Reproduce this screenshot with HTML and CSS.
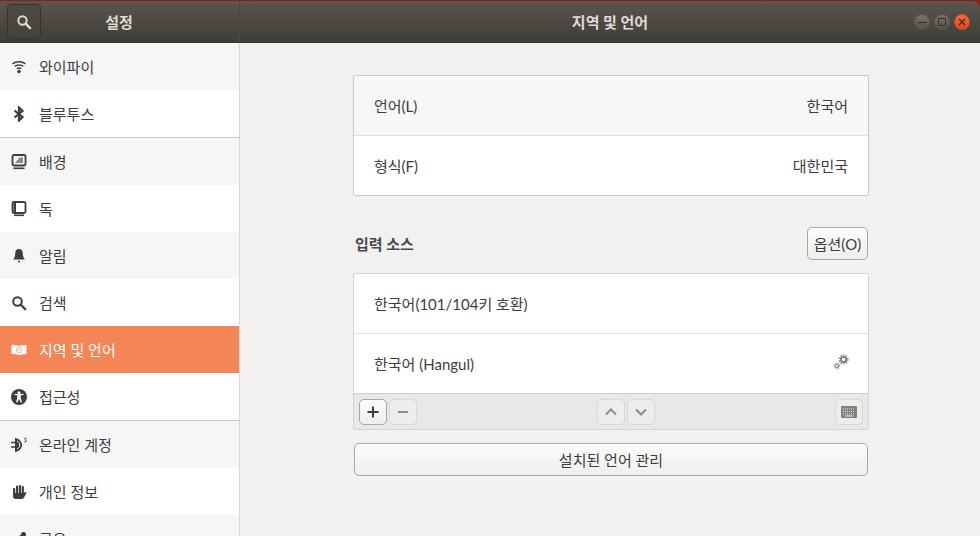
FILE: index.html
```html
<!DOCTYPE html>
<html lang="ko">
<head>
<meta charset="utf-8">
<title>설정</title>
<link rel="stylesheet" href="styles.css">
</head>
<body>
<div class="window">
  <header class="titlebar">
    <div class="tb-left">
      <button class="search-btn" aria-label="검색">
        <svg width="16" height="16" viewBox="0 0 16 16"><circle cx="6.5" cy="6.5" r="4.2" fill="none" stroke="#dfdbd2" stroke-width="2"/><path d="M9.7 9.7l4.4 4.4" stroke="#dfdbd2" stroke-width="2.4" stroke-linecap="round"/></svg>
      </button>
      <div class="tb-left-title">설정</div>
    </div>
    <div class="tb-title">지역 및 언어</div>
    <div class="tb-controls">
      <span class="tb-sep"></span>
      <span class="wbtn"><svg width="10" height="10" viewBox="0 0 10 10"><path d="M0.500 5.500h9" stroke="#35332e" stroke-width="1"/></svg></span>
      <span class="wbtn"><svg width="10" height="10" viewBox="0 0 10 10"><rect x="1.500" y="1.500" width="7" height="7" fill="none" stroke="#35332e" stroke-width="1"/></svg></span>
      <span class="wbtn wbtn-close"><svg width="10" height="10" viewBox="0 0 10 10"><path d="M2 2l6 6M8 2l-6 6" stroke="#4a2014" stroke-width="1.200"/></svg></span>
    </div>
  </header>
  <div class="content">
    <nav class="sidebar">
      <div class="item alt"><span class="ico"><svg width="16" height="16" viewBox="0 0 16 16"><g fill="none" stroke="#3d3d3d" stroke-width="1.500"><path d="M1.500 4.800C5 1.900 11 1.900 14.500 4.800"/><path d="M3.700 7.300C6 5.500 10 5.500 12.300 7.300"/><path d="M5.800 9.700C7 8.900 9 8.900 10.200 9.700"/></g><circle cx="8" cy="12.500" r="1.800" fill="#3d3d3d"/></svg></span><span>와이파이</span></div>
      <div class="item sep"><span class="ico"><svg width="16" height="16" viewBox="0 0 16 16"><path d="M3.500 4.500l8 6.500-3.500 3.500V1.500L11.500 5l-8 6.500" fill="none" stroke="#3d3d3d" stroke-width="2.200"/></svg></span><span>블루투스</span></div>
      <div class="item alt"><span class="ico"><svg width="16" height="16" viewBox="0 0 16 16"><rect x="1.500" y="1" width="13" height="10.500" rx="1.500" fill="none" stroke="#3d3d3d" stroke-width="1.800"/><path d="M4 9h8V3.500H8.500z" fill="#8a8a8a"/><rect x="2.500" y="13.500" width="11" height="1.600" fill="#3d3d3d"/></svg></span><span>배경</span></div>
      <div class="item"><span class="ico"><svg width="16" height="16" viewBox="0 0 16 16"><rect x="1.500" y="1" width="13" height="11" rx="1.500" fill="none" stroke="#3d3d3d" stroke-width="1.800"/><rect x="2.500" y="2" width="2.500" height="9" fill="#3d3d3d"/><rect x="3" y="13.500" width="10" height="1.600" fill="#3d3d3d"/></svg></span><span>독</span></div>
      <div class="item alt"><span class="ico"><svg width="16" height="16" viewBox="0 0 16 16"><path d="M8 1c-2.800 0-3.800 2-3.800 4.500 0 3-.9 4.500-2.200 6h12c-1.300-1.500-2.200-3-2.200-6C11.800 3 10.800 1 8 1z" fill="#3d3d3d"/><rect x="7" y="12.800" width="2" height="1.500" fill="#3d3d3d"/></svg></span><span>알림</span></div>
      <div class="item"><span class="ico"><svg width="16" height="16" viewBox="0 0 16 16"><circle cx="6.500" cy="6.500" r="4.300" fill="none" stroke="#3d3d3d" stroke-width="2"/><path d="M9.700 9.700l4.600 4.600" stroke="#3d3d3d" stroke-width="2.300" stroke-linecap="round"/></svg></span><span>검색</span></div>
      <div class="item active"><span class="ico"><svg width="16" height="16" viewBox="0 0 16 16"><path d="M0.500 3c3-1 5 .8 7.500.8s4.500-1.300 7.500-.8v9c-3-.5-5 .8-7.500.8S3.500 11 .5 12z" fill="#fff"/><circle cx="8" cy="8" r="2.800" fill="none" stroke="#f6b89d" stroke-width="1"/><circle cx="8" cy="8" r="1" fill="#f6b89d"/></svg></span><span>지역 및 언어</span></div>
      <div class="item sep"><span class="ico"><svg width="16" height="16" viewBox="0 0 16 16"><circle cx="8" cy="8" r="8" fill="#3d3d3d"/><circle cx="8" cy="3.900" r="1.600" fill="#fff"/><path d="M3.300 5.800L6.300 6.600V9L5 13.200l1.300.3L8 10l1.700 3.500 1.300-.3L9.700 9V6.600l3-.8-.3-1.100-3 .6H6.600l-3-.6z" fill="#fff"/></svg></span><span>접근성</span></div>
      <div class="item alt"><span class="ico"><svg width="16" height="16" viewBox="0 0 16 16"><path d="M0 5.500h5M0 10h5" stroke="#3d3d3d" stroke-width="1.600" fill="none"/><path d="M4 1c4 .5 7 3.500 7 7s-3 6.500-7 7z" fill="#3d3d3d"/><path d="M6 4C7.800 4.800 8.800 6.300 8.800 8S7.800 11.200 6 12" fill="none" stroke="#fff" stroke-width="1"/><path d="M15.500 1.500c-1-.6-2-.2-1.800.6s1.800 1.200 1.500 2.300c-.3.800-1.200.8-2 .2" fill="none" stroke="#3d3d3d" stroke-width="1"/></svg></span><span>온라인 계정</span></div>
      <div class="item"><span class="ico"><svg width="16" height="16" viewBox="0 0 16 16"><g fill="#3d3d3d"><rect x="2" y="4" width="2.200" height="8" rx="1"/><rect x="4.900" y="1.500" width="2.200" height="10" rx="1"/><rect x="7.800" y="1" width="2.200" height="10" rx="1"/><rect x="10.700" y="2" width="2.200" height="10" rx="1"/><path d="M2 9h10.900l.8-.6c.8-.7 2-.1 1.500.9l-2 4c-.5 1-1.400 1.700-2.700 1.700H5c-2 0-3-1-3-3z"/></g></svg></span><span>개인 정보</span></div>
      <div class="item alt"><span class="ico"><svg width="16" height="16" viewBox="0 0 16 16"><g fill="#3d3d3d"><circle cx="12.500" cy="3.500" r="2.500"/><circle cx="3.500" cy="8" r="2.500"/><circle cx="12.500" cy="12.500" r="2.500"/></g><path d="M12.500 3.500L3.500 8l9 4.500" fill="none" stroke="#3d3d3d" stroke-width="1.500"/></svg></span><span>공유</span></div>
    </nav>
    <main class="main">
      <div class="column">
        <section class="list">
          <div class="row row-hl"><span>언어(L)</span><span>한국어</span></div>
          <div class="row row-top"><span>형식(F)</span><span>대한민국</span></div>
        </section>
        <div class="section-head">
          <h2>입력 소스</h2>
          <button class="btn btn-options">옵션(O)</button>
        </div>
        <section class="list list-sources">
          <div class="row"><span>한국어(101/104키 호환)</span></div>
          <div class="row row-top"><span>한국어 (Hangul)</span>
            <svg class="gears" width="16" height="16" viewBox="0 0 16 16"><g fill="none" stroke="#777"><circle cx="10.500" cy="5.500" r="2.600" stroke-width="1.800"/><circle cx="10.500" cy="5.500" r="4.400" stroke-width="1.200" stroke-dasharray="1.500 1.300"/><circle cx="4" cy="12" r="1.600" stroke-width="1"/><circle cx="4" cy="12" r="2.800" stroke-width="1" stroke-dasharray="1.200 1"/></g></svg>
          </div>
          <div class="toolbar">
            <div class="group">
              <button class="tbtn tbtn-on" aria-label="추가"><svg width="14" height="14" viewBox="0 0 14 14"><path d="M7 1.500v11M1.500 7h11" stroke="#3d3d3d" stroke-width="2"/></svg></button>
              <button class="tbtn" aria-label="제거"><svg width="14" height="14" viewBox="0 0 14 14"><path d="M2 7h10" stroke="#8f8c87" stroke-width="2"/></svg></button>
            </div>
            <div class="group">
              <button class="tbtn" aria-label="위로"><svg width="14" height="14" viewBox="0 0 14 14"><path d="M2 9.500l5-5 5 5" fill="none" stroke="#8f8c87" stroke-width="2"/></svg></button>
              <button class="tbtn" aria-label="아래로"><svg width="14" height="14" viewBox="0 0 14 14"><path d="M2 4.500l5 5 5-5" fill="none" stroke="#8f8c87" stroke-width="2"/></svg></button>
            </div>
            <button class="tbtn" aria-label="키보드"><svg width="16" height="12" viewBox="0 0 16 12"><rect width="16" height="12" rx="1" fill="#84817c"/><path d="M2 3h12M2 5.500h12M2 8h12" stroke="#e9e8e6" stroke-width="1" stroke-dasharray="1 1"/><path d="M4 10h8" stroke="#e9e8e6" stroke-width="1"/></svg></button>
          </div>
        </section>
        <button class="btn btn-wide">설치된 언어 관리</button>
      </div>
    </main>
  </div>
</div>
</body>
</html>
```
FILE: styles.css
```css
* { box-sizing: border-box; }
html, body { margin: 0; height: 100%; overflow: hidden; }
body {
  background: #f2f1f0;
  color: #3d3d3d;
  font-family: "Lato", "Noto Sans CJK KR", sans-serif;
  font-size: 15px;
}
button { font: inherit; color: inherit; padding: 0; margin: 0; }
.window { width: 980px; height: 536px; display: flex; flex-direction: column; overflow: hidden; background: #8a1f1c; }

.titlebar {
  height: 42px;
  flex: none;
  display: flex;
  align-items: center;
  margin-top: 1px;
  border-top-right-radius: 7px;
  background: linear-gradient(#5a564e, #3f3d38);
  color: #dfdbd2;
  font-weight: 700;
  font-size: 15px;
  border-bottom: 1px solid #3a3833;
}
.tb-left {
  width: 240px;
  height: 100%;
  flex: none;
  display: flex;
  align-items: center;
  padding-left: 7px;
  border-right: 1px solid #4a4842;
}
.search-btn {
  width: 34px;
  height: 35px;
  display: flex;
  align-items: center;
  justify-content: center;
  background: linear-gradient(#4f4c45, #45423c);
  border: 1px solid #35332e;
  border-radius: 4px;
}
.tb-left-title { width: 156px; text-align: center; }
.tb-title { flex: 1; text-align: center; padding-left: 74px; }
.tb-controls {
  width: 74px;
  flex: none;
  display: flex;
  align-items: center;
  gap: 4px;
  height: 100%;
}
.tb-sep { width: 1px; height: 28px; background: #4b4944; margin-right: 3px; }
.wbtn {
  width: 16px;
  height: 16px;
  border-radius: 50%;
  display: flex;
  align-items: center;
  justify-content: center;
  background: linear-gradient(#75726b, #55524c);
  border: 1px solid #5a5850;
}
.wbtn-close { background: linear-gradient(#f0703f, #d9491f); border-color: #d9491f; }

.content { flex: 1; display: flex; min-height: 0; background: #f2f1f0; }
.sidebar {
  width: 240px;
  flex: none;
  background: #fff;
  border-right: 1px solid #d9d8d6;
  overflow: hidden;
}
.item {
  height: 47px;
  display: flex;
  align-items: center;
  padding-left: 11px;
  gap: 12px;
  line-height: 20px;
}
.item.alt { background: #f6f6f6; }
.item.sep { height: 48px; border-bottom: 1px solid #c9c9c9; }
.item.active { background: #f48557; color: #fff; }
.ico { width: 16px; height: 16px; display: flex; flex: none; }

.main { flex: 1; display: flex; justify-content: center; padding: 32px 0 0 2px; min-width: 0; }
.column { width: 516px; }
.list {
  background: #fff;
  border: 1px solid #c9c8c6;
  border-radius: 2px;
}
.row {
  height: 60px;
  display: flex;
  align-items: center;
  justify-content: space-between;
  padding: 0 20px;
}
.list > .row:first-child { height: 59px; }
.row-hl { background: #f7f7f7; }
.row-top { border-top: 1px solid #e2e2e2; }
.section-head {
  height: 35px;
  margin-top: 30px;
  margin-bottom: 12px;
  display: flex;
  align-items: center;
  justify-content: space-between;
  padding: 0 1px 0 2px;
}
.section-head h2 { margin: 0; font-size: 15px; font-weight: 700; color: #4a4a4a; }
.btn {
  border: 1px solid #a9a7a2;
  border-radius: 5px;
  background: linear-gradient(#fcfcfb, #efeeec);
  box-shadow: 0 1px 0 #fff inset;
}
.btn-options { width: 61px; height: 33px; }
.list-sources { border-color: #d5d4d2; }
.gears { margin-right: -1px; margin-top: -3px; }
.toolbar {
  height: 36px;
  background: #e9e8e6;
  border-top: 1px solid #cfcecc;
  display: flex;
  align-items: center;
  justify-content: space-between;
  padding: 0 5px 0 5px;
}
.group { display: flex; gap: 2px; }
.tbtn {
  width: 28px;
  height: 26px;
  display: flex;
  align-items: center;
  justify-content: center;
  border: 1px solid #d9d8d6;
  border-radius: 5px;
  background: #eeedeb;
}
.tbtn-on { border-color: #a9a7a2; background: linear-gradient(#fcfcfb, #efeeec); }
.btn-wide { display: block; width: 514px; height: 33px; margin: 13px 0 0 1px; }
```
